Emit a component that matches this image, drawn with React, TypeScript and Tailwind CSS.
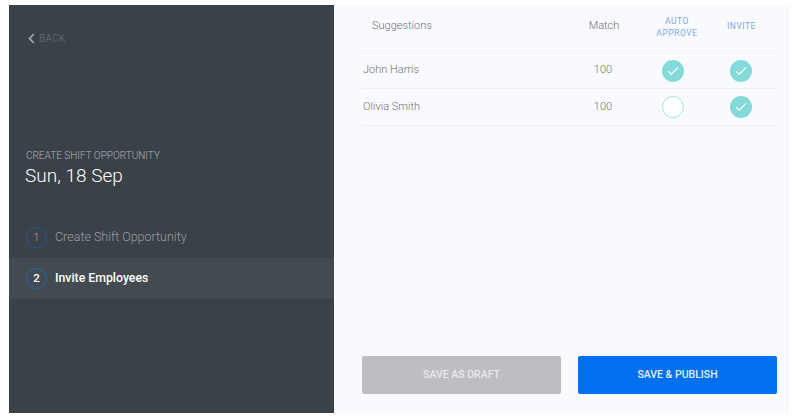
const Check = ({ on }: { on: boolean }) => (
  <div
    className={
      on
        ? 'w-[22px] h-[22px] rounded-full bg-[#84d9d9] flex items-center justify-center'
        : 'w-[22px] h-[22px] rounded-full border border-[#a8e4e4] bg-white'
    }
  >
    {on && (
      <svg width="12" height="10" viewBox="0 0 12 10" fill="none">
        <path d="M1 5.2 L4.4 8.2 L11 1.4" stroke="#ffffff" strokeWidth="1.2" />
      </svg>
    )}
  </div>
);

const Step = ({ n, label, active }: { n: number; label: string; active?: boolean }) => (
  <div className={active ? 'h-[41px] flex items-center pl-[17px] bg-[#434a50]' : 'h-[41px] flex items-center pl-[17px]'}>
    <div
      className={
        active
          ? 'w-[21px] h-[21px] rounded-full border-[1.5px] border-[#1a68bd] flex items-center justify-center text-[11.5px] font-medium text-white'
          : 'w-[21px] h-[21px] rounded-full border-[1.5px] border-[#1c5a9c] flex items-center justify-center text-[11.5px] font-light text-[#a0a5a9]'
      }
    >
      {n}
    </div>
    <span className={active ? 'ml-2 text-[12.3px] font-medium text-white' : 'ml-2 text-[12.5px] font-light text-[#9a9fa4]'}>{label}</span>
  </div>
);

const Row = ({ name, h, auto, invite }: { name: string; h: string; auto: boolean; invite: boolean }) => (
  <div className={`${h} flex items-center border-b border-[#eceef3] text-[11px] font-light text-[#6f7174]`}>
    <span className="w-[214px] pl-px">{name}</span>
    <span className="w-[54px] text-center">100</span>
    <div className="w-[83px] flex justify-center pl-[2px]">
      <Check on={auto} />
    </div>
    <div className="w-[55px] flex justify-center">
      <Check on={invite} />
    </div>
  </div>
);

export default function App() {
  return (
    <div className="w-[795px] h-[417px] bg-white pt-[5px] pb-[4px] pl-[9px] pr-[5px] flex font-['Roboto',sans-serif]">
      <div className="w-[325px] bg-[#3a4147] flex flex-col">
        <div className="mt-[26px] pl-[19px] flex items-center text-[10px] font-light text-[#70767b] tracking-[0.4px] h-[14px]">
          <svg width="7" height="11" viewBox="0 0 7 11" fill="none">
            <path d="M5.8 1 L1.6 5.5 L5.8 10" stroke="#a3a7ab" strokeWidth="1.8" />
          </svg>
          <span className="ml-[4px]">BACK</span>
        </div>
        <div className="mt-[104px] pl-[17px] text-[10px] leading-[14px] font-light text-[#aeb2b6]">CREATE SHIFT OPPORTUNITY</div>
        <div className="mt-[1px] pl-[16px] text-[19px] leading-[24px] font-light text-white">Sun, 18 Sep</div>
        <div className="mt-[29px]">
          <Step n={1} label="Create Shift Opportunity" />
          <Step n={2} label="Invite Employees" active />
        </div>
      </div>
      <div className="flex-1 bg-[#f9faff] pl-[28px] pr-[12px] flex flex-col">
        <div className="h-[48px] flex items-center border-b border-[#f0f1f6] pb-[4px]">
          <span className="w-[214px] pl-[10px] text-[11px] font-light text-[#6f7174]">Suggestions</span>
          <span className="w-[54px] text-center text-[11px] font-light text-[#6f7174] pl-[2px]">Match</span>
          <span className="w-[83px] pl-[11px] text-center text-[8.5px] leading-[12px] font-normal tracking-[0.5px] text-[#7ea6e4]">
            AUTO
            <br />
            APPROVE
          </span>
          <span className="w-[55px] pl-[2px] text-center text-[8.5px] font-normal tracking-[0.5px] text-[#7ea6e4]">INVITE</span>
        </div>
        <Row name="John Harris" h="h-[36px]" auto invite />
        <Row name="Olivia Smith" h="h-[37px]" auto={false} invite />
        <div className="mt-auto mb-[19px] flex gap-[17px]">
          <button className="w-[199px] h-[38px] rounded-[2px] bg-[#bdbec2] text-[10.5px] font-medium text-[#e9e9ec]">
            SAVE AS DRAFT
          </button>
          <button className="w-[199px] h-[38px] rounded-[2px] bg-[#0070ef] text-[10.5px] font-medium text-[#e6f1fe]">
            SAVE &amp; PUBLISH
          </button>
        </div>
      </div>
    </div>
  );
}
